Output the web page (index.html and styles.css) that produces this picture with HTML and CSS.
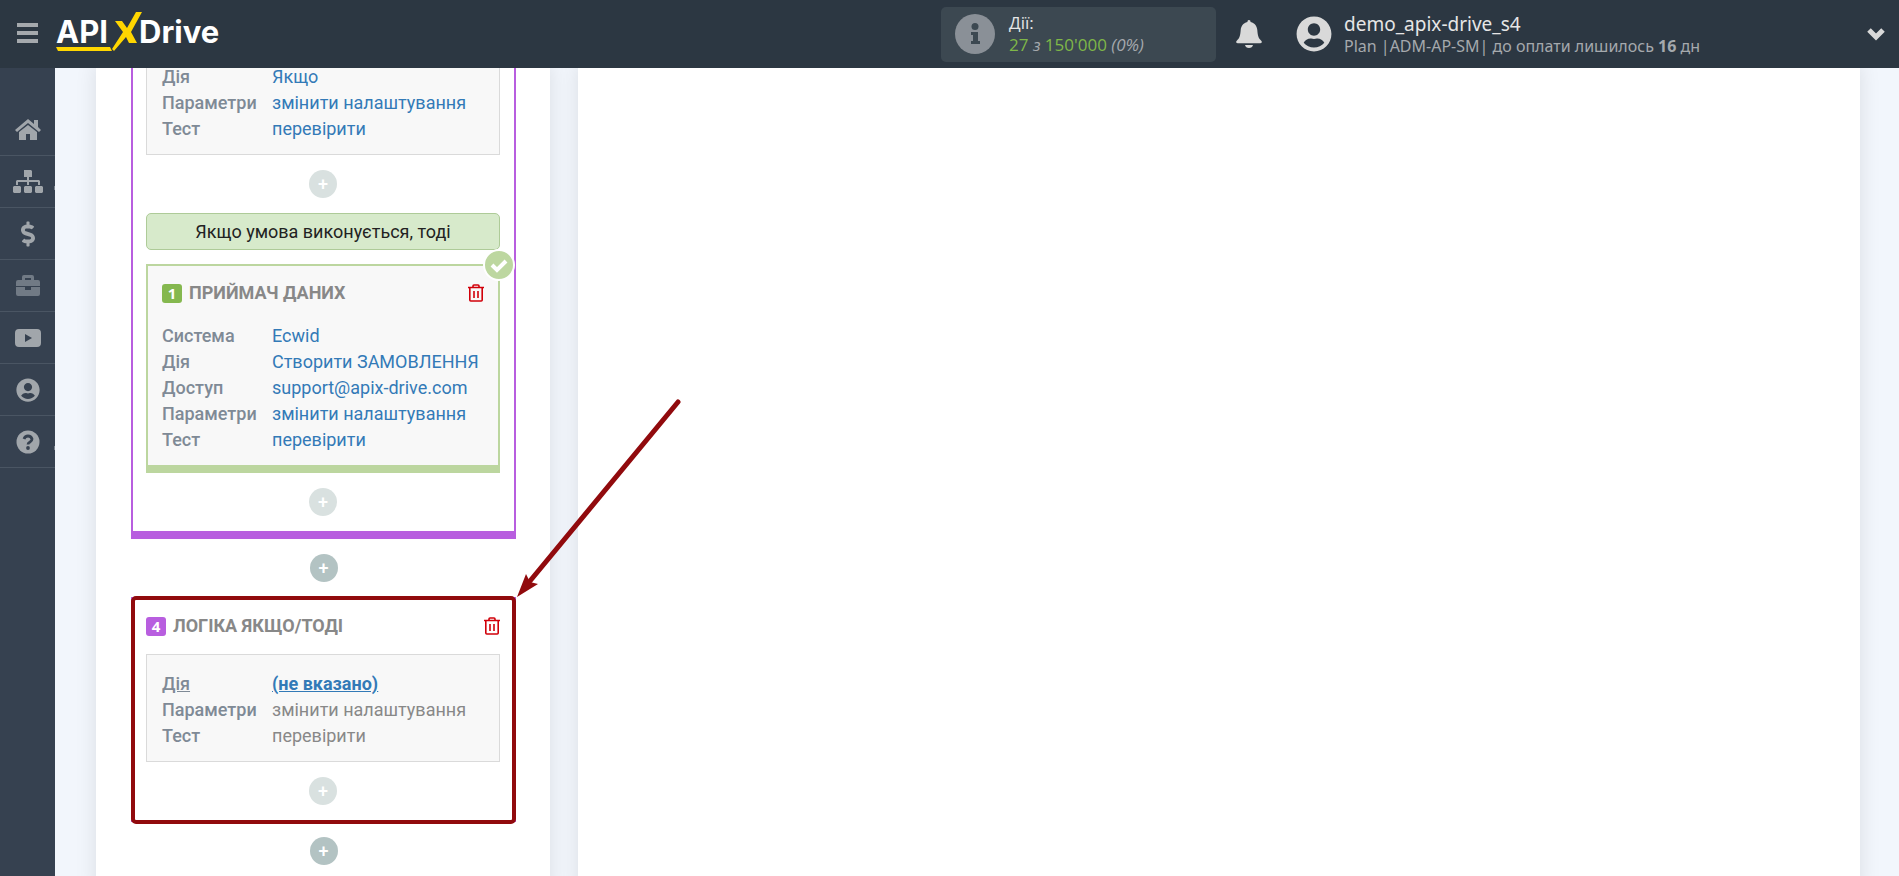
FILE: index.html
```html
<!DOCTYPE html>
<html lang="uk">
<head>
  <meta charset="UTF-8" />
  <meta name="viewport" content="width=device-width, initial-scale=1" />
  <title>ApiX-Drive</title>
  <link rel="stylesheet" href="styles.css">
</head>
<body>

<svg class="sprite" aria-hidden="true">
  <symbol id="trash" viewBox="0 0 16 18">
    <path d="M0 3.5h16M5 3V2q0-1 1-1h4q1 0 1 1v1M1.800 3.500V16q0 1 1 1h10.400q1 0 1-1V3.500M6 7v7M10 7v7" fill="none" stroke="currentColor" stroke-width="1.600"/>
  </symbol>
  <symbol id="user" viewBox="0 0 496 512">
    <path fill="currentColor" d="M248 8C111 8 0 119 0 256s111 248 248 248 248-111 248-248S385 8 248 8zm0 96c48.600 0 88 39.400 88 88s-39.400 88-88 88-88-39.400-88-88 39.400-88 88-88zm0 344c-58.700 0-111.300-26.600-146.500-68.200 18.800-35.400 55.600-59.800 98.500-59.800 2.400 0 4.800.4 7.100 1.100 13 4.200 26.600 6.900 40.900 6.900 14.300 0 28-2.700 40.900-6.900 2.300-.7 4.700-1.100 7.100-1.100 42.900 0 79.700 24.400 98.500 59.800C359.300 421.400 306.700 448 248 448z"/>
  </symbol>
</svg>

<header class="topbar">
  <button class="menu-btn" type="button" aria-label="Меню"><span></span><span></span><span></span></button>
  <a class="logo" href="#" aria-label="APIXDrive">
    <svg viewBox="0 0 170 44" width="170" height="44">
      <text x="0" y="31">API</text>
      <text x="83" y="31">Drive</text>
      <path d="M59 9h7l5 7 9-16h6L75 20l6 11h-8l-3-6-12 14-2-2 11-17zM0 35h54l2 4H2z" fill="#ffd600"/>
    </svg>
  </a>
  <div class="usage">
    <svg class="usage-icon" viewBox="0 0 40 40">
      <circle cx="20" cy="20" r="20" fill="#8a9097"/>
      <circle cx="20" cy="12.500" r="3.500" fill="#3c4851"/>
      <path d="M16 18h7v9h2v3h-9v-3h2v-6h-2z" fill="#3c4851"/>
    </svg>
    <div>
      <div class="usage-title">Дії:</div>
      <div class="usage-count"><b>27</b> <i>з</i> <b>150'000</b> <i>(0%)</i></div>
    </div>
  </div>
  <button class="bell" type="button" aria-label="Сповіщення">
    <svg viewBox="0 0 26 28" width="26" height="28">
      <path fill="currentColor" d="M13 0q1.600 0 1.600 2C19 3 21 6.500 21.300 10c.4 6 1.200 8 3.700 10.500 1.500 1.500.8 2.800-.6 2.800H1.600C.2 23.300-.5 22 1 20.500 3.500 18 4.300 16 4.700 10 5 6.500 7 3 11.400 2 11.400 0 13 0 13 0zM9 25h8q-.7 3-4 3t-4-3z"/>
    </svg>
  </button>
  <a class="account" href="#">
    <svg class="avatar"><use href="#user"/></svg>
    <span class="account-text">
      <span class="account-name">demo_apix-drive_s4</span>
      <span class="account-plan">Plan |ADM-AP-SM| до оплати лишилось <b>16</b> дн</span>
    </span>
  </a>
  <button class="expand" type="button" aria-label="Розгорнути">
    <svg viewBox="0 0 18 14" width="18" height="14"><path d="M2 3l7 7 7-7" fill="none" stroke="currentColor" stroke-width="5"/></svg>
  </button>
</header>

<div class="layout">
  <nav class="sidebar">
    <a href="#" aria-label="Головна">
      <svg viewBox="0 0 26 22" width="26" height="22"><path fill="currentColor" d="M13 0l6 5V1h4v7l3 3-2 2L13 4 2 13l-2-2zM13 6l9 7v8h-7v-6h-4v6H4v-8z"/></svg>
    </a>
    <a class="has-sub" href="#" aria-label="Зв'язки">
      <svg viewBox="0 0 30 24" width="30" height="24"><path fill="currentColor" d="M11 0h7l1 1v6h-3v3h10l1 1v4h-2v-3h-9v3h-2v-3H5v3H3v-4l1-1h10V7h-3zM1 16h6l1 1v5l-1 1H1l-1-1v-5zM12 16h6l1 1v5l-1 1h-6l-1-1v-5zM23 16h6l1 1v5l-1 1h-6l-1-1v-5z"/></svg>
    </a>
    <a href="#" aria-label="Оплата">
      <svg viewBox="0 0 288 512" width="14" height="26"><path fill="currentColor" d="M209.200 233.400l-108-31.600C88.700 198.200 80 186.500 80 173.500c0-16.300 13.200-29.500 29.500-29.500h66.300c12.200 0 24.200 3.700 34.200 10.500 6.100 4.100 14.300 3.100 19.500-2l34.800-34c7.100-6.900 6.100-18.400-1.800-24.500C238 74.800 207.400 64.100 176 64V16c0-8.800-7.200-16-16-16h-32c-8.800 0-16 7.200-16 16v48h-2.500C45.800 64-5.400 118.700.5 183.600c4.200 46.100 39.400 83.600 83.800 96.600l102.500 30c12.500 3.700 21.200 15.300 21.200 28.300 0 16.300-13.200 29.500-29.500 29.500h-66.300C100 368 88 364.300 78 357.500c-6.100-4.100-14.300-3.100-19.500 2l-34.800 34c-7.100 6.900-6.100 18.400 1.800 24.500 24.500 19.200 55.100 29.900 86.500 30v48c0 8.800 7.200 16 16 16h32c8.800 0 16-7.200 16-16v-48.200c46.600-.9 90.300-28.600 105.700-72.700 21.500-61.600-14.600-124.800-72.500-141.700z"/></svg>
    </a>
    <a class="muted" href="#" aria-label="Проєкти">
      <svg viewBox="0 0 24 22" width="24" height="22"><path fill="currentColor" fill-rule="evenodd" d="M6 5V2q0-2 2-2h8q2 0 2 2v3h4q2 0 2 2v4H0V7q0-2 2-2zM9 3v2h6V3zM0 12h9v3h6v-3h9v7q0 2-2 2H2q-2 0-2-2z"/></svg>
    </a>
    <a href="#" aria-label="Відео">
      <svg viewBox="0 0 26 18" width="26" height="18"><path fill="currentColor" fill-rule="evenodd" d="M4 0h18q4 0 4 4v10q0 4-4 4H4q-4 0-4-4V4q0-4 4-4zM10 5v8l7-4z"/></svg>
    </a>
    <a href="#" aria-label="Профіль">
      <svg width="24" height="24"><use href="#user"/></svg>
    </a>
    <a class="has-sub" href="#" aria-label="Допомога">
      <svg viewBox="0 0 24 24" width="24" height="24"><circle cx="12" cy="12" r="11.500" fill="currentColor"/><path d="M8 9q1-3 4-3t4 3q0 2-2 3-2 1-2 2.500" fill="none" stroke="#364150" stroke-width="2.800"/><circle cx="12" cy="18" r="1.900" fill="#364150"/></svg>
    </a>
  </nav>

  <main class="content">
    <section class="panel steps">
      <div class="logic">
        <div class="card card-scrolled">
          <dl>
            <dt>Дія</dt><dd><a href="#">Якщо</a></dd>
            <dt>Параметри</dt><dd><a href="#">змінити налаштування</a></dd>
            <dt>Тест</dt><dd><a href="#">перевірити</a></dd>
          </dl>
        </div>
        <button class="add light" type="button">+</button>
        <div class="condition">Якщо умова виконується, тоді</div>
        <div class="card card-done">
          <svg class="done-mark" viewBox="0 0 32 32"><circle cx="16" cy="16" r="15" fill="#bdd7a0" stroke="#fff" stroke-width="2"/><path d="M9 16l5 5 9-9" fill="none" stroke="#fff" stroke-width="4"/></svg>
          <div class="step-head">
            <span class="num green">1</span>
            <h2>ПРИЙМАЧ ДАНИХ</h2>
            <button class="del" type="button" aria-label="Видалити"><svg><use href="#trash"/></svg></button>
          </div>
          <dl>
            <dt>Система</dt><dd><a href="#">Ecwid</a></dd>
            <dt>Дія</dt><dd><a href="#">Створити ЗАМОВЛЕННЯ</a></dd>
            <dt>Доступ</dt><dd><a href="#">support@apix-drive.com</a></dd>
            <dt>Параметри</dt><dd><a href="#">змінити налаштування</a></dd>
            <dt>Тест</dt><dd><a href="#">перевірити</a></dd>
          </dl>
        </div>
        <button class="add light" type="button">+</button>
      </div>

      <button class="add" type="button">+</button>

      <div class="logic-new">
        <div class="step-head">
          <span class="num purple">4</span>
          <h2>ЛОГІКА ЯКЩО/ТОДІ</h2>
          <button class="del" type="button" aria-label="Видалити"><svg><use href="#trash"/></svg></button>
        </div>
        <div class="card">
          <dl>
            <dt class="current">Дія</dt><dd class="current"><a href="#">(не вказано)</a></dd>
            <dt>Параметри</dt><dd>змінити налаштування</dd>
            <dt>Тест</dt><dd>перевірити</dd>
          </dl>
        </div>
        <button class="add light" type="button">+</button>
        <div class="frame"></div>
        <svg class="arrow" viewBox="0 0 168 200">
          <path d="M164 3L16 182" fill="none" stroke="#910a0d" stroke-width="5" stroke-linecap="round"/>
          <path d="M3 198L12 175l4 8 8 2z" fill="#910a0d"/>
        </svg>
      </div>

      <button class="add" type="button">+</button>
    </section>

    <section class="panel workspace"></section>
  </main>
</div>

</body>
</html>
```
FILE: styles.css
```css
* {
  box-sizing: border-box;
}
body {
  margin: 0;
  background: #f2f6fc;
  font-family: Roboto, "Liberation Sans", sans-serif;
  font-size: 18px;
  line-height: 26px;
  color: #888;
}
a {
  color: #337ab7;
  text-decoration: none;
}
button {
  padding: 0;
  border: none;
  background: none;
  font: inherit;
  color: inherit;
  cursor: pointer;
}
svg {
  display: block;
}
.sprite {
  position: absolute;
  width: 0;
  height: 0;
}

/* top bar */
.topbar {
  position: fixed;
  top: 0; left: 0; right: 0;
  z-index: 10;
  height: 68px;
  padding: 0 14px 0 17px;
  display: flex;
  align-items: center;
  background: #2c3742;
  color: #d9d9d9;
  font-family: "Open Sans", "Noto Sans", sans-serif;
}
.menu-btn {
  width: 21px;
  margin-bottom: 3px;
  display: grid;
  gap: 4px;
}
.menu-btn span {
  height: 4px;
  background: #a5a9ad;
}
.logo {
  margin-left: 18px;
  margin-right: auto;
}
.logo text {
  font-family: Inter, sans-serif;
  font-size: 31px;
  font-weight: 700;
  fill: #fff;
}
.usage {
  width: 275px;
  height: 55px;
  padding: 0 14px;
  display: flex;
  align-items: center;
  gap: 14px;
  background: #3c4851;
  border-radius: 5px;
  font-size: 17px;
  line-height: 22px;
}
.usage-icon {
  width: 40px;
  height: 40px;
}
.usage-title {
  color: #e6e6e6;
}
.usage-count {
  color: #a5a9ad;
}
.usage-count b {
  font-weight: 400;
  color: #7fb748;
}
.bell {
  margin: 0 34px 0 20px;
}
.account {
  width: 571px;
  display: flex;
  align-items: center;
  gap: 12px;
  color: #a5a9ad;
}
.avatar {
  width: 36px;
  height: 36px;
  color: #d9d9d9;
}
.account-text {
  display: grid;
  padding-top: 2px;
  font-family: "Noto Sans", sans-serif;
  font-size: 16px;
  line-height: 22px;
}
.account-name {
  font-size: 19px;
  color: #e6e6e6;
}

/* side menu */
.layout {
  min-height: 100vh;
  padding-top: 64px;
  display: flex;
}
.sidebar {
  width: 55px;
  flex: none;
  padding-top: 40px;
  background: #364150;
}
.sidebar a {
  position: relative;
  height: 52px;
  display: flex;
  align-items: center;
  justify-content: center;
  border-bottom: 1px solid #4a5563;
  color: #a1a6ab;
}
.sidebar .muted {
  color: #717a85;
}
.has-sub::after {
  content: "";
  position: absolute;
  right: 0;
  bottom: 17px;
  width: 1px;
  height: 4px;
  background: #7b848e;
}

/* content */
.content {
  flex: 1;
  padding: 0 39px 0 41px;
  display: flex;
  gap: 28px;
}
.panel {
  background: #fff;
  box-shadow: 0 0 20px rgba(0,0,0,0.1);
}
.steps {
  width: 454px;
  flex: none;
  padding: 0 34px 12px 35px;
}
.workspace {
  flex: 1;
}
.logic {
  padding: 0 14px 0 13px;
  border: 2px solid #b85edf;
  border-top: none;
  border-bottom-width: 8px;
}
.card {
  position: relative;
  padding: 16px 15px 12px;
  background: #f8f8f8;
  border: 1px solid #dadada;
}
.card-scrolled {
  padding-top: 0;
  border-top: none;
}
.card-done {
  margin-top: 14px;
  padding: 12px 14px;
  border: 2px solid #bcd69f;
  border-bottom-width: 8px;
}
.card-done .step-head {
  margin-bottom: 15px;
}
.done-mark {
  position: absolute;
  top: -17px;
  right: -17px;
  width: 32px;
  height: 32px;
}
dl {
  margin: 0;
  display: grid;
  grid-template-columns: 110px 1fr;
  white-space: nowrap;
}
dt {
  font-weight: 500;
  color: #7f8a96;
}
dd {
  margin: 0;
}
.current,
.current a {
  text-decoration: underline;
}
dd.current {
  font-weight: 700;
}
.condition {
  height: 37px;
  border: 1px solid #aecb98;
  border-radius: 5px;
  background: #d7eacb;
  color: #222;
  line-height: 35px;
  text-align: center;
}
.step-head {
  height: 30px;
  display: flex;
  align-items: center;
}
.step-head h2 {
  margin: 0 auto 0 7px;
  font-size: 18px;
  font-weight: 700;
}
.num {
  width: 20px;
  height: 19px;
  border-radius: 3px;
  color: #fff;
  font-family: "Open Sans", sans-serif;
  font-size: 15px;
  font-weight: 700;
  line-height: 19px;
  text-align: center;
}
.green {
  background: #85b84f;
}
.purple {
  background: #b85edf;
}
.del {
  color: #d1000a;
}
.del svg {
  width: 16px;
  height: 18px;
}
.add {
  display: block;
  width: 28px;
  height: 28px;
  margin: 15px auto;
  border-radius: 50%;
  background: #b3c3c3;
  color: #fff;
  font-weight: 500;
  line-height: 28px;
}
.light {
  background: #d9e1e0;
}
.logic-new {
  position: relative;
  padding: 12px 14px 0 13px;
  border: 2px dashed #b85edf;
}
.logic-new .card {
  margin-top: 13px;
}

/* highlight over the new block */
.frame {
  position: absolute;
  inset: -3px -2px -4px;
  border: 4px solid #910a0d;
  border-radius: 5px;
}
.arrow {
  position: absolute;
  left: 100%;
  bottom: 100%;
  width: 168px;
  height: 200px;
}
```
